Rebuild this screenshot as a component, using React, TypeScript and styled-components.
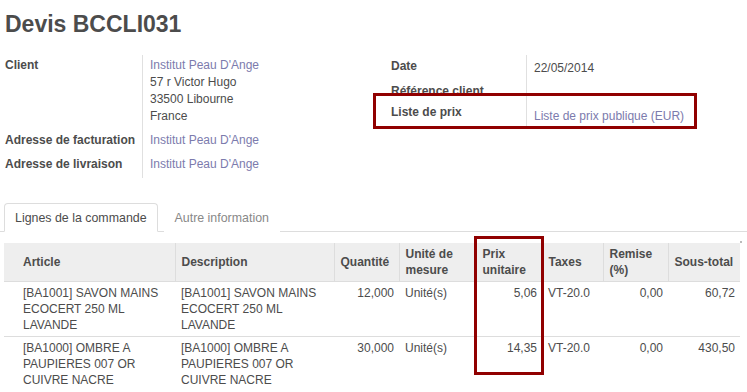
import React from 'react';
import styled, { createGlobalStyle } from 'styled-components';

const GlobalStyle = createGlobalStyle`
  html, body {
    margin: 0;
    padding: 0;
    background: #ffffff;
  }
  body {
    font-family: "Liberation Sans", Arial, sans-serif;
    font-size: 12px;
    color: #4c4c4c;
  }
`;

type Line = {
    article: string;
    description: string;
    qty: string;
    uom: string;
    price: string;
    taxes: string;
    discount: string;
    subtotal: string;
};

const lines: Line[] = [
    {
        article: '[BA1001] SAVON MAINS ECOCERT 250 ML LAVANDE',
        description: '[BA1001] SAVON MAINS ECOCERT 250 ML LAVANDE',
        qty: '12,000',
        uom: 'Unité(s)',
        price: '5,06',
        taxes: 'VT-20.0',
        discount: '0,00',
        subtotal: '60,72',
    },
    {
        article: '[BA1000] OMBRE A PAUPIERES 007 OR CUIVRE NACRE',
        description: '[BA1000] OMBRE A PAUPIERES 007 OR CUIVRE NACRE',
        qty: '30,000',
        uom: 'Unité(s)',
        price: '14,35',
        taxes: 'VT-20.0',
        discount: '0,00',
        subtotal: '430,50',
    },
];

const columns = [
    { title: 'Article', width: 171 },
    { title: 'Description', width: 159 },
    { title: 'Quantité', width: 65 },
    { title: 'Unité de mesure', width: 77 },
    { title: 'Prix unitaire', width: 66 },
    { title: 'Taxes', width: 61 },
    { title: 'Remise (%)', width: 65 },
    { title: 'Sous-total', width: 72 },
];

const App = () => {
    return (
        <Sheet>
            <GlobalStyle />
            <Title>Devis BCCLI031</Title>

            <Groups>
                <LeftGroup>
                    <FieldRow $pad="2px 0 5px">
                        <Label $width="137px">Client</Label>
                        <Value>
                            <Link>Institut Peau D'Ange</Link>
                            <div>57 r Victor Hugo</div>
                            <div>33500 Libourne</div>
                            <div>France</div>
                        </Value>
                    </FieldRow>
                    <FieldRow $pad="2px 0 5px">
                        <Label $width="137px">Adresse de facturation</Label>
                        <Value>
                            <Link>Institut Peau D'Ange</Link>
                        </Value>
                    </FieldRow>
                    <FieldRow $pad="2px 0 5px">
                        <Label $width="137px">Adresse de livraison</Label>
                        <Value>
                            <Link>Institut Peau D'Ange</Link>
                        </Value>
                    </FieldRow>
                </LeftGroup>

                <RightGroup>
                    <FieldRow $pad="3px 0 5px">
                        <Label $width="135px">Date</Label>
                        <Value $shift>22/05/2014</Value>
                    </FieldRow>
                    <FieldRow $pad="3px 0 2px">
                        <Label $width="135px">Référence client</Label>
                        <Value $shift />
                    </FieldRow>
                    <FieldRow $pad="1px 0 3px">
                        <Label $width="135px">Liste de prix</Label>
                        <Value $shift>
                            <Link>Liste de prix publique (EUR)</Link>
                        </Value>
                    </FieldRow>
                    <Highlight $left={0} $top={38} $width={324} $height={36} />
                </RightGroup>
            </Groups>

            <TabBar>
                <Tab $active>Lignes de la commande</Tab>
                <Tab>Autre information</Tab>
            </TabBar>

            <TableWrap>
                <LinesTable>
                    <colgroup>
                        {columns.map((c) => (
                            <col key={c.title} style={{ width: c.width }} />
                        ))}
                    </colgroup>
                    <thead>
                        <tr>
                            {columns.map((c, i) => (
                                <HeadCell key={c.title} $first={i === 0}>
                                    {c.title}
                                </HeadCell>
                            ))}
                        </tr>
                    </thead>
                    <tbody>
                        {lines.map((l, i) => (
                            <BodyRow key={i}>
                                <Cell $first>{l.article}</Cell>
                                <Cell>{l.description}</Cell>
                                <Cell $num>{l.qty}</Cell>
                                <Cell>{l.uom}</Cell>
                                <Cell $num>{l.price}</Cell>
                                <Cell>{l.taxes}</Cell>
                                <Cell $num>{l.discount}</Cell>
                                <Cell $num>{l.subtotal}</Cell>
                            </BodyRow>
                        ))}
                    </tbody>
                </LinesTable>
                <Grip />
                <Highlight $left={470} $top={-7} $width={70} $height={139} />
            </TableWrap>
        </Sheet>
    );
};

export default App;

const Sheet = styled.div`
  width: 747px;
  height: 392px;
  overflow: hidden;
  box-sizing: border-box;
`;

const Title = styled.h1`
  margin: 10px 0 0 5px;
  font-size: 23px;
  line-height: 28px;
  font-weight: 700;
  color: #4c4c4c;
`;

const Groups = styled.div`
  display: flex;
  align-items: flex-start;
  margin-top: 17px;
  padding-left: 5px;
`;

const LeftGroup = styled.div`
  display: flex;
  flex-direction: column;
  width: 368px;
`;

const RightGroup = styled.div`
  position: relative;
  display: flex;
  flex-direction: column;
  flex: 1;
  padding-left: 18px;
`;

const FieldRow = styled.div<{ $pad: string }>`
  display: flex;
  align-items: stretch;
  line-height: 17px;

  & > * {
    padding: ${(p) => p.$pad};
  }
`;

const Label = styled.div<{ $width: string }>`
  width: ${(p) => p.$width};
  flex: none;
  font-weight: 700;
  color: #4c4c4c;
  white-space: nowrap;
`;

const Value = styled.div<{ $shift?: boolean }>`
  flex: 1;
  min-height: 17px;
  border-left: 1px solid #e0e0e0;
  padding-left: 7px !important;
  color: #4c4c4c;
  ${(p) => (p.$shift ? 'padding-top: 5px !important; padding-bottom: 1px !important;' : '')}
`;

const Link = styled.div`
  color: #7c7bad;
`;

const TabBar = styled.div`
  display: flex;
  align-items: flex-end;
  margin-top: 25px;
  height: 28px;
  padding-left: 4px;
  border-bottom: 1px solid #dddddd;
`;

const Tab = styled.div<{ $active?: boolean }>`
  height: 29px;
  margin-bottom: -1px;
  margin-right: 6px;
  padding: 0 10px;
  box-sizing: border-box;
  display: flex;
  align-items: center;
  font-size: 12.4px;
  border: 1px solid ${(p) => (p.$active ? '#dddddd' : 'transparent')};
  border-bottom-color: ${(p) => (p.$active ? '#ffffff' : 'transparent')};
  border-radius: 4px 4px 0 0;
  background: #ffffff;
  color: ${(p) => (p.$active ? '#4c4c4c' : '#888888')};
`;

const TableWrap = styled.div`
  position: relative;
  margin: 11px 0 0 4px;
  width: 736px;
`;

const LinesTable = styled.table`
  width: 736px;
  table-layout: fixed;
  border-collapse: collapse;
  font-size: 12px;
`;

const HeadCell = styled.th<{ $first?: boolean }>`
  background: #eeeeee;
  font-weight: 700;
  text-align: left;
  vertical-align: middle;
  line-height: 16px;
  height: 31px;
  padding: 3px 4px 3px ${(p) => (p.$first ? '19px' : '6px')};
  border-left: ${(p) => (p.$first ? 'none' : '1px solid #dddddd')};
  border-bottom: 1px solid #dddddd;
  color: #4c4c4c;
`;

const BodyRow = styled.tr`
  border-bottom: 1px solid #dddddd;

  &:last-child {
    border-bottom: none;
  }
`;

const Cell = styled.td<{ $first?: boolean; $num?: boolean }>`
  vertical-align: top;
  line-height: 16px;
  padding: 3px 5px 3px ${(p) => (p.$first ? '19px' : '6px')};
  text-align: ${(p) => (p.$num ? 'right' : 'left')};
  color: #4c4c4c;
`;

const Grip = styled.div`
  position: absolute;
  right: -2px;
  top: -2px;
  width: 2px;
  height: 2px;
  background: #bbbbbb;
`;

const Highlight = styled.div<{ $left: number; $top: number; $width: number; $height: number }>`
  position: absolute;
  left: ${(p) => p.$left}px;
  top: ${(p) => p.$top}px;
  width: ${(p) => p.$width}px;
  height: ${(p) => p.$height}px;
  box-sizing: border-box;
  border: 3px solid #900000;
  pointer-events: none;
`;
